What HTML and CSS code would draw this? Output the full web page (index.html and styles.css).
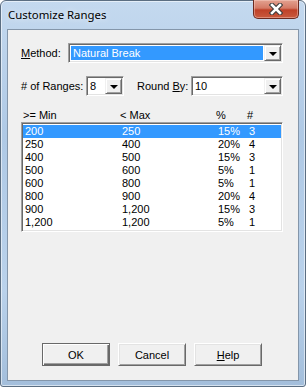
FILE: index.html
```html
<!DOCTYPE html>
<html>
<head>
<meta charset="utf-8">
<title>Customize Ranges</title>
<link rel="stylesheet" href="styles.css">
</head>
<body>
<div class="window">
  <div class="titlebar">
    <span class="title">Customize Ranges</span>
    <button class="close" aria-label="Close">
      <svg width="14" height="12" viewBox="0 0 14 12">
        <path d="M3 2 L11 10 M11 2 L3 10" stroke="#3b3b3b" stroke-width="4.6" stroke-linecap="square" fill="none"/>
        <path d="M3 2 L11 10 M11 2 L3 10" stroke="#ffffff" stroke-width="2.6" stroke-linecap="square" fill="none"/>
      </svg>
    </button>
  </div>
  <div class="client">
    <div class="row">
      <span class="lbl lbl-method"><u>M</u>ethod:</span>
      <div class="combo combo-method">
        <span class="value selected">Natural Break</span>
        <span class="drop"><i class="arrow"></i></span>
      </div>
    </div>
    <div class="row row-two">
      <span class="lbl lbl-ranges"># of Ranges:</span>
      <div class="combo combo-ranges">
        <span class="value">8</span>
        <span class="drop"><i class="arrow"></i></span>
      </div>
      <span class="lbl lbl-round">Round <u>B</u>y:</span>
      <div class="combo combo-round">
        <span class="value">10</span>
        <span class="drop"><i class="arrow"></i></span>
      </div>
    </div>
    <div class="list-head cols">
      <span>&gt;= Min</span><span>&lt; Max</span><span>%</span><span>#</span>
    </div>
    <div class="list">
      <div class="item cols sel"><span>200</span><span>250</span><span>15%</span><span>3</span></div>
      <div class="item cols"><span>250</span><span>400</span><span>20%</span><span>4</span></div>
      <div class="item cols"><span>400</span><span>500</span><span>15%</span><span>3</span></div>
      <div class="item cols"><span>500</span><span>600</span><span>5%</span><span>1</span></div>
      <div class="item cols"><span>600</span><span>800</span><span>5%</span><span>1</span></div>
      <div class="item cols"><span>800</span><span>900</span><span>20%</span><span>4</span></div>
      <div class="item cols"><span>900</span><span>1,200</span><span>15%</span><span>3</span></div>
      <div class="item cols"><span>1,200</span><span>1,200</span><span>5%</span><span>1</span></div>
    </div>
    <div class="buttons">
      <button class="btn btn-default">OK</button>
      <button class="btn">Cancel</button>
      <button class="btn"><u>H</u>elp</button>
    </div>
  </div>
</div>
</body>
</html>
```
FILE: styles.css
```css
html, body {
  margin: 0;
  padding: 0;
}
body {
  width: 306px;
  height: 387px;
  overflow: hidden;
  background: #ffffff;
  font-family: "Liberation Sans", Arial, sans-serif;
  font-size: 11px;
  color: #000;
}
.window {
  box-sizing: border-box;
  width: 306px;
  height: 387px;
  display: flex;
  flex-direction: column;
  border: 1px solid #5b6e82;
  border-radius: 6px 6px 3px 3px;
  padding: 0 6px 5px 6px;
  background: linear-gradient(180deg, #c4d9ef 0%, #afc9e5 35%, #bad2eb 75%, #a3bedb 100%);
  box-shadow: inset 0 0 0 1px rgba(255,255,255,0.55);
}
.titlebar {
  height: 28px;
  flex: none;
  display: flex;
  align-items: flex-start;
  justify-content: space-between;
}
.title {
  font-family: "Noto Sans", "Open Sans", sans-serif;
  font-size: 11.4px;
  line-height: 16px;
  margin-top: 6px;
  padding-left: 1px;
  color: #000;
  text-shadow: 0 0 6px rgba(255,255,255,0.9);
}
.close {
  width: 46px;
  height: 19px;
  margin: -1px 0 0 0;
  padding: 0;
  border: 1px solid #6b2a20;
  border-top: none;
  border-radius: 0 0 5px 5px;
  background: linear-gradient(180deg, #e3a291 0%, #d47a66 45%, #bf4128 55%, #c95a3e 100%);
  box-shadow: inset 0 0 0 1px rgba(255,220,210,0.4);
  display: flex;
  align-items: center;
  justify-content: center;
}
.close svg {
  display: block;
}
.client {
  flex: 1;
  display: flex;
  flex-direction: column;
  border: 1px solid #8496aa;
  background: #f0f0f0;
  padding: 13px 15px 14px 13px;
}
.row {
  display: flex;
  align-items: center;
  height: 20px;
}
.row-two {
  margin-top: 13px;
}
.lbl {
  white-space: nowrap;
  line-height: 13px;
}
.lbl-method { width: 47px; }
.lbl-ranges { width: 65px; }
.lbl-round { width: 54px; margin-left: 13px; }
.combo {
  box-sizing: border-box;
  height: 20px;
  display: flex;
  align-items: stretch;
  background: #fff;
  border: 1px solid;
  border-color: #a0a0a0 #ffffff #ffffff #a0a0a0;
  box-shadow: inset 1px 1px 0 #696969, inset -1px -1px 0 #e3e3e3;
  padding: 1px;
}
.combo-method { flex: 1; }
.combo-ranges { width: 38px; }
.combo-round { flex: 1; }
.value {
  flex: 1;
  margin: 1px;
  padding-left: 2px;
  line-height: 14px;
}
.combo-ranges .value,
.combo-round .value {
  padding-left: 1px;
}
.selected {
  background: #3399ff;
  color: #fff;
}
.drop {
  box-sizing: border-box;
  width: 17px;
  flex: none;
  background: #f0f0f0;
  border: 1px solid;
  border-color: #f0f0f0 #696969 #696969 #f0f0f0;
  box-shadow: inset 1px 1px 0 #ffffff, inset -1px -1px 0 #a0a0a0;
  display: flex;
  align-items: center;
  justify-content: center;
}
.arrow {
  display: block;
  width: 0;
  height: 0;
  border-left: 4px solid transparent;
  border-right: 4px solid transparent;
  border-top: 4px solid #000;
  margin-top: 1px;
}
.cols {
  display: grid;
  grid-template-columns: 97px 96px 31px 1fr;
}
.list-head {
  margin-top: 13px;
  height: 13px;
  line-height: 13px;
  padding-left: 2px;
}
.list {
  box-sizing: border-box;
  height: 110px;
  background: #fff;
  border: 1px solid;
  border-color: #a0a0a0 #ffffff #ffffff #a0a0a0;
  box-shadow: inset 1px 1px 0 #696969, inset -1px -1px 0 #e3e3e3;
  padding: 2px 1px 0 1px;
}
.item {
  height: 13px;
  line-height: 13px;
  padding-left: 2px;
  white-space: nowrap;
}
.item.sel {
  background: #3399ff;
  color: #fff;
}
.buttons {
  margin-top: auto;
  display: flex;
  justify-content: center;
  gap: 8px;
}
.btn {
  box-sizing: border-box;
  width: 68px;
  height: 23px;
  padding: 0;
  font-family: "Liberation Sans", Arial, sans-serif;
  font-size: 11px;
  color: #000;
  background: #f0f0f0;
  border: 1px solid;
  border-color: #ffffff #696969 #696969 #ffffff;
  box-shadow: inset 1px 1px 0 #e3e3e3, inset -1px -1px 0 #a0a0a0;
}
.btn-default {
  border-color: #696969;
  box-shadow: inset 1px 1px 0 #ffffff, inset -1px -1px 0 #696969, inset -2px -2px 0 #a0a0a0;
}
```
